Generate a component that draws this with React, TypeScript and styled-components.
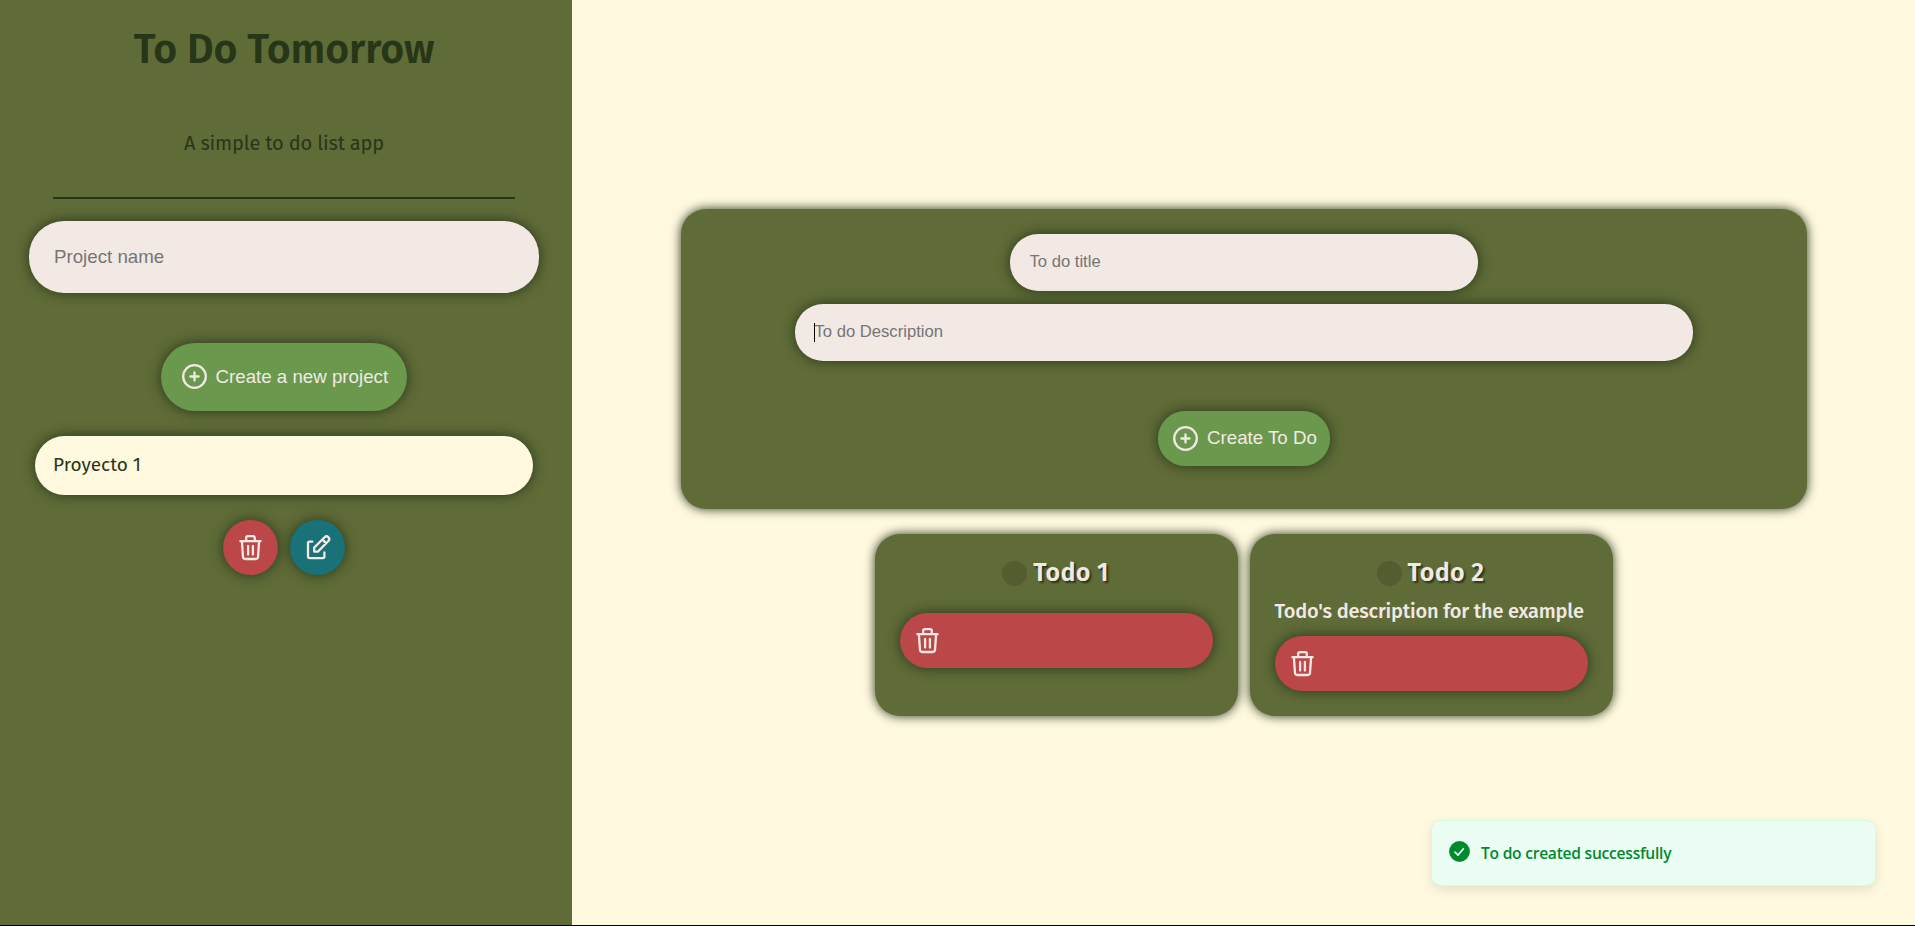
import React from "react";
import styled, { createGlobalStyle } from "styled-components";

const c = {
  olive: "#606c38",
  cream: "#fff9e0",
  dark: "#283618",
  light: "#f2e9e4",
  green: "#6a994e",
  red: "#bc4749",
  teal: "#197278",
};
const ui = `"Liberation Sans", Arial, sans-serif`;
const display = `"Fira Sans", "Open Sans", sans-serif`;

const GlobalStyle = createGlobalStyle`
  * { box-sizing: border-box; }
  body { margin: 0; background: ${c.cream}; font-family: ${display}; }
`;

const Page = styled.div`
  display: flex;
  height: 926px;
  border-bottom: 1px solid #000;
  overflow: hidden;
`;

const Sidebar = styled.aside`
  width: 572px;
  flex: none;
  padding: 26px 4px 0 0;
  display: flex;
  flex-direction: column;
  align-items: center;
  background: ${c.olive};
  color: ${c.dark};
`;

const Title = styled.h1`
  margin: 0;
  font-size: 41px;
  line-height: 48px;
  font-weight: 600;
  letter-spacing: -0.1px;
  white-space: nowrap;
`;

const Subtitle = styled.p`
  margin: 55px 0 0;
  font-size: 20px;
  line-height: 28px;
  letter-spacing: -0.15px;
  white-space: nowrap;
`;

const Divider = styled.hr`
  width: 462px;
  height: 2px;
  margin: 40px 0 22px;
  border: 0;
  background: ${c.dark};
`;

const Input = styled.input<{ $w: number; $large?: boolean }>`
  display: block;
  width: ${(p) => p.$w}px;
  height: ${(p) => (p.$large ? 72 : 57)}px;
  padding: ${(p) => (p.$large ? "0 25px 1px" : "0 20px 2px")};
  border: 0;
  outline: 0;
  border-radius: ${(p) => (p.$large ? 35 : 28)}px;
  background: ${c.light};
  color: ${c.dark};
  font: ${(p) => (p.$large ? "18.72px" : "16.64px")} ${ui};
  box-shadow: 0 0 14px ${c.dark};
  &::placeholder { color: #757575; opacity: 1; }
`;

const CreateButton = styled.button<{ $large?: boolean }>`
  display: flex;
  align-items: center;
  gap: 9px;
  width: ${(p) => (p.$large ? 246 : 172)}px;
  height: ${(p) => (p.$large ? 68 : 55)}px;
  padding: 0 0 1px ${(p) => (p.$large ? 20.5 : 15.5)}px;
  border: 0;
  border-radius: ${(p) => (p.$large ? 34 : 27)}px;
  background: ${c.green};
  color: ${c.light};
  font: 18.72px ${ui};
  white-space: nowrap;
  box-shadow: 0 0 14px ${c.dark};
`;

const SidebarAction = styled.div`
  margin: 50px 0 25px;
`;

const Project = styled.div`
  width: 498px;
  height: 59px;
  padding: 0 18px;
  border-radius: 30px;
  background: ${c.cream};
  font-size: 19px;
  line-height: 58px;
  box-shadow: 0 0 14px ${c.dark};
`;

const ProjectActions = styled.div`
  display: flex;
  gap: 12px;
  margin-top: 25px;
`;

const IconButton = styled.button<{ $bg: string; $wide?: boolean }>`
  display: flex;
  align-items: center;
  width: ${(p) => (p.$wide ? "100%" : "55px")};
  height: 55px;
  flex: none;
  padding: 0 15px;
  border: 0;
  border-radius: 28px;
  background: ${(p) => p.$bg};
  color: ${c.light};
  box-shadow: 0 0 14px ${c.dark};
`;

const Main = styled.main`
  flex: 1;
  display: flex;
  flex-direction: column;
  align-items: center;
  padding-top: 209px;
`;

const FormCard = styled.section`
  width: 1126px;
  height: 300px;
  padding-top: 25px;
  display: flex;
  flex-direction: column;
  align-items: center;
  gap: 13px;
  border-radius: 25px;
  background: ${c.olive};
  box-shadow: 0 0 11px ${c.dark};
`;

const FormAction = styled.div`
  margin-top: 37px;
`;

const DescriptionField = styled.div`
  position: relative;
`;

const Caret = styled.span`
  position: absolute;
  left: 19px;
  top: 19px;
  width: 1px;
  height: 19px;
  background: #000;
`;

const TodoList = styled.section`
  display: flex;
  gap: 12px;
  margin-top: 25px;
`;

const TodoCard = styled.article`
  width: 363px;
  height: 182px;
  padding: 25px;
  display: flex;
  flex-direction: column;
  border-radius: 25px;
  background: ${c.olive};
  color: ${c.light};
  box-shadow: 0 0 11px ${c.dark};
`;

const TodoHead = styled.div`
  display: flex;
  align-items: center;
  justify-content: center;
  gap: 6px;
  height: 29px;
  padding-right: 1px;
`;

const Check = styled.span`
  width: 25px;
  height: 25px;
  border-radius: 50%;
  background: #525e2f;
`;

const TodoTitle = styled.h2`
  margin: 0;
  font-size: 25px;
  line-height: 29px;
  font-weight: 600;
  letter-spacing: 0.3px;
  text-shadow: 2px 2px 2px ${c.dark};
  white-space: nowrap;
`;

const TodoText = styled.p`
  height: 23px;
  margin: 11px 0 14px;
  font-size: 20px;
  line-height: 25px;
  font-weight: 500;
  letter-spacing: -0.2px;
  white-space: nowrap;
  &:empty { height: 0; }
`;

const Toast = styled.div`
  position: absolute;
  left: 1431px;
  top: 820px;
  width: 445px;
  height: 66px;
  padding: 0 17px;
  display: flex;
  align-items: center;
  gap: 11px;
  border: 1px solid #cdfee1;
  border-radius: 10px;
  background: #ecfdf3;
  color: #008a2e;
  font: 600 15.6px/24px "Open Sans", sans-serif;
  letter-spacing: -0.25px;
  box-shadow: 0 4px 12px rgba(0, 0, 0, 0.1);
`;

const Svg = styled.svg`
  display: block;
  flex: none;
  overflow: visible;
  fill: none;
  stroke: currentColor;
  stroke-width: 2.3;
  stroke-linecap: round;
  stroke-linejoin: round;
`;

const ToastIcon = styled.svg`
  flex: none;
  margin-top: -3px;
`;

const TrashIcon = () => (
  <Svg width="25" height="25" viewBox="0 0 25 25">
    <path d="M2.4 6.2H22.6M8.2 6V2.9Q8.2 1.2 9.9 1.2H15.1Q16.8 1.2 16.8 2.9V6" />
    <path d="M3.9 6.4 5 22Q5.2 24 7.2 24H17.8Q19.8 24 20 22L21.1 6.4M10.1 11V19.5M14.9 11V19.5" />
  </Svg>
);

const EditIcon = () => (
  <Svg width="25" height="25" viewBox="0 0 25 25">
    <path d="M7.4 6.6H4.6Q3 6.6 3 8.2V21.6Q3 23.2 4.6 23.2H17.8Q19.4 23.2 19.4 21.6V17.4" />
    <path d="M9.2 16.6V12.6L19.6 2.2A2.6 2.6 0 0 1 23.4 6L12.9 16.6ZM17.5 4.6 21 8.1" />
  </Svg>
);

const PlusIcon = () => (
  <Svg width="25" height="25" viewBox="0 0 25 25">
    <circle cx="12.5" cy="12.5" r="11.3" />
    <path d="M12.5 8.4V16.6M8.4 12.5H16.6" />
  </Svg>
);

const CheckIcon = () => (
  <ToastIcon width="21" height="21" viewBox="0 0 21 21">
    <circle cx="10.5" cy="10.5" r="10.4" fill="#008a2e" />
    <path d="M6 11.1 9 14.1 14.4 7.8" fill="none" stroke="#ecfdf3" strokeWidth="1.7" strokeLinecap="round" strokeLinejoin="round" />
  </ToastIcon>
);

const todos = [
  { title: "Todo 1", text: "" },
  { title: "Todo 2", text: "Todo's description for the example" },
];

export default function App() {
  return (
    <>
      <GlobalStyle />
      <Page>
        <Sidebar>
          <Title>To Do Tomorrow</Title>
          <Subtitle>A simple to do list app</Subtitle>
          <Divider />
          <Input $w={510} $large placeholder="Project name" />
          <SidebarAction>
            <CreateButton $large><PlusIcon />Create a new project</CreateButton>
          </SidebarAction>
          <Project>Proyecto 1</Project>
          <ProjectActions>
            <IconButton $bg={c.red} aria-label="Delete project"><TrashIcon /></IconButton>
            <IconButton $bg={c.teal} aria-label="Edit project"><EditIcon /></IconButton>
          </ProjectActions>
        </Sidebar>
        <Main>
          <FormCard>
            <Input $w={468} placeholder="To do title" />
            <DescriptionField>
              <Input $w={898} placeholder="To do Description" />
              <Caret />
            </DescriptionField>
            <FormAction>
              <CreateButton><PlusIcon />Create To Do</CreateButton>
            </FormAction>
          </FormCard>
          <TodoList>
            {todos.map((t) => (
              <TodoCard key={t.title}>
                <TodoHead>
                  <Check />
                  <TodoTitle>{t.title}</TodoTitle>
                </TodoHead>
                <TodoText>{t.text}</TodoText>
                <IconButton $bg={c.red} $wide aria-label="Delete to do"><TrashIcon /></IconButton>
              </TodoCard>
            ))}
          </TodoList>
        </Main>
        <Toast><CheckIcon />To do created successfully</Toast>
      </Page>
    </>
  );
}
